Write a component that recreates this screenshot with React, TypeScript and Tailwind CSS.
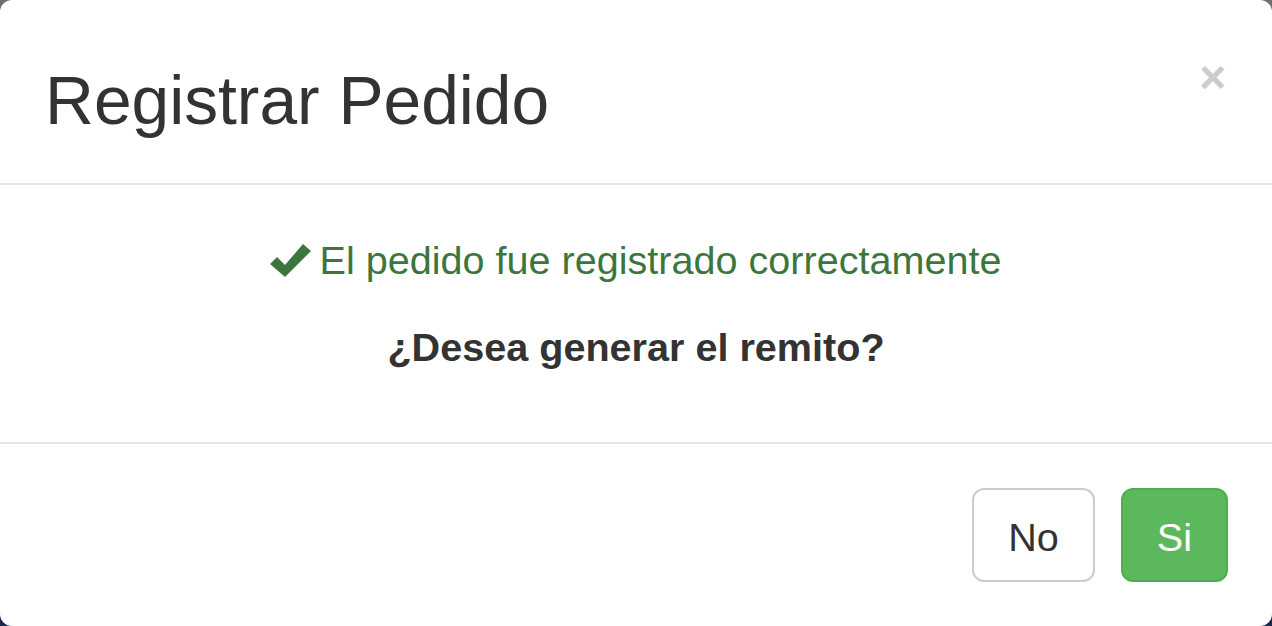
import React from "react";

function CheckIcon() {
  return (
    <svg width="41" height="33" viewBox="0 0 41 33" className="shrink-0">
      <path d="M0 20 L7 13 L15 21 L33 0 L41 7 L15 33 Z" fill="#3c763d" />
    </svg>
  );
}

export default function App() {
  return (
    <div className="w-[1272px] h-[626px] bg-[linear-gradient(to_bottom,#6e6e6e_50%,#172a4c_50%)] font-['Liberation_Sans',Arial,sans-serif]">
      <div className="w-full h-full bg-white rounded-[12px] flex flex-col overflow-hidden">
        <div className="h-[185px] border-b-2 border-[#e5e5e5] flex justify-between items-start pl-[45px] pr-[46px] shrink-0">
          <h1 className="pt-[67px] text-[67.7px] leading-none text-[#333333] font-normal">Registrar Pedido</h1>
          <span className="pt-[54px] text-[46px] leading-none font-bold text-[#cccccc]">×</span>
        </div>
        <div className="h-[257px] flex flex-col items-center pt-[56px] gap-[47px] shrink-0">
          <div className="flex items-center gap-[8px] text-[#3c763d] text-[39.6px] leading-none">
            <CheckIcon />
            <span>El pedido fue registrado correctamente</span>
          </div>
          <div className="text-[#333333] text-[39.6px] leading-none font-bold">¿Desea generar el remito?</div>
        </div>
        <div className="flex-1 border-t-2 border-[#e5e5e5] flex justify-end items-start pt-[44px] pr-[44px] gap-[26px]">
          <button className="h-[94px] px-[34px] pt-[5px] border-2 border-[#cccccc] rounded-[12px] bg-white text-[#333333] text-[39.6px] leading-none flex items-center">No</button>
          <button className="h-[94px] px-[34px] pt-[5px] border-2 border-[#4cae4c] rounded-[12px] bg-[#5cb85c] text-white text-[39.6px] leading-none flex items-center">Si</button>
        </div>
      </div>
    </div>
  );
}
